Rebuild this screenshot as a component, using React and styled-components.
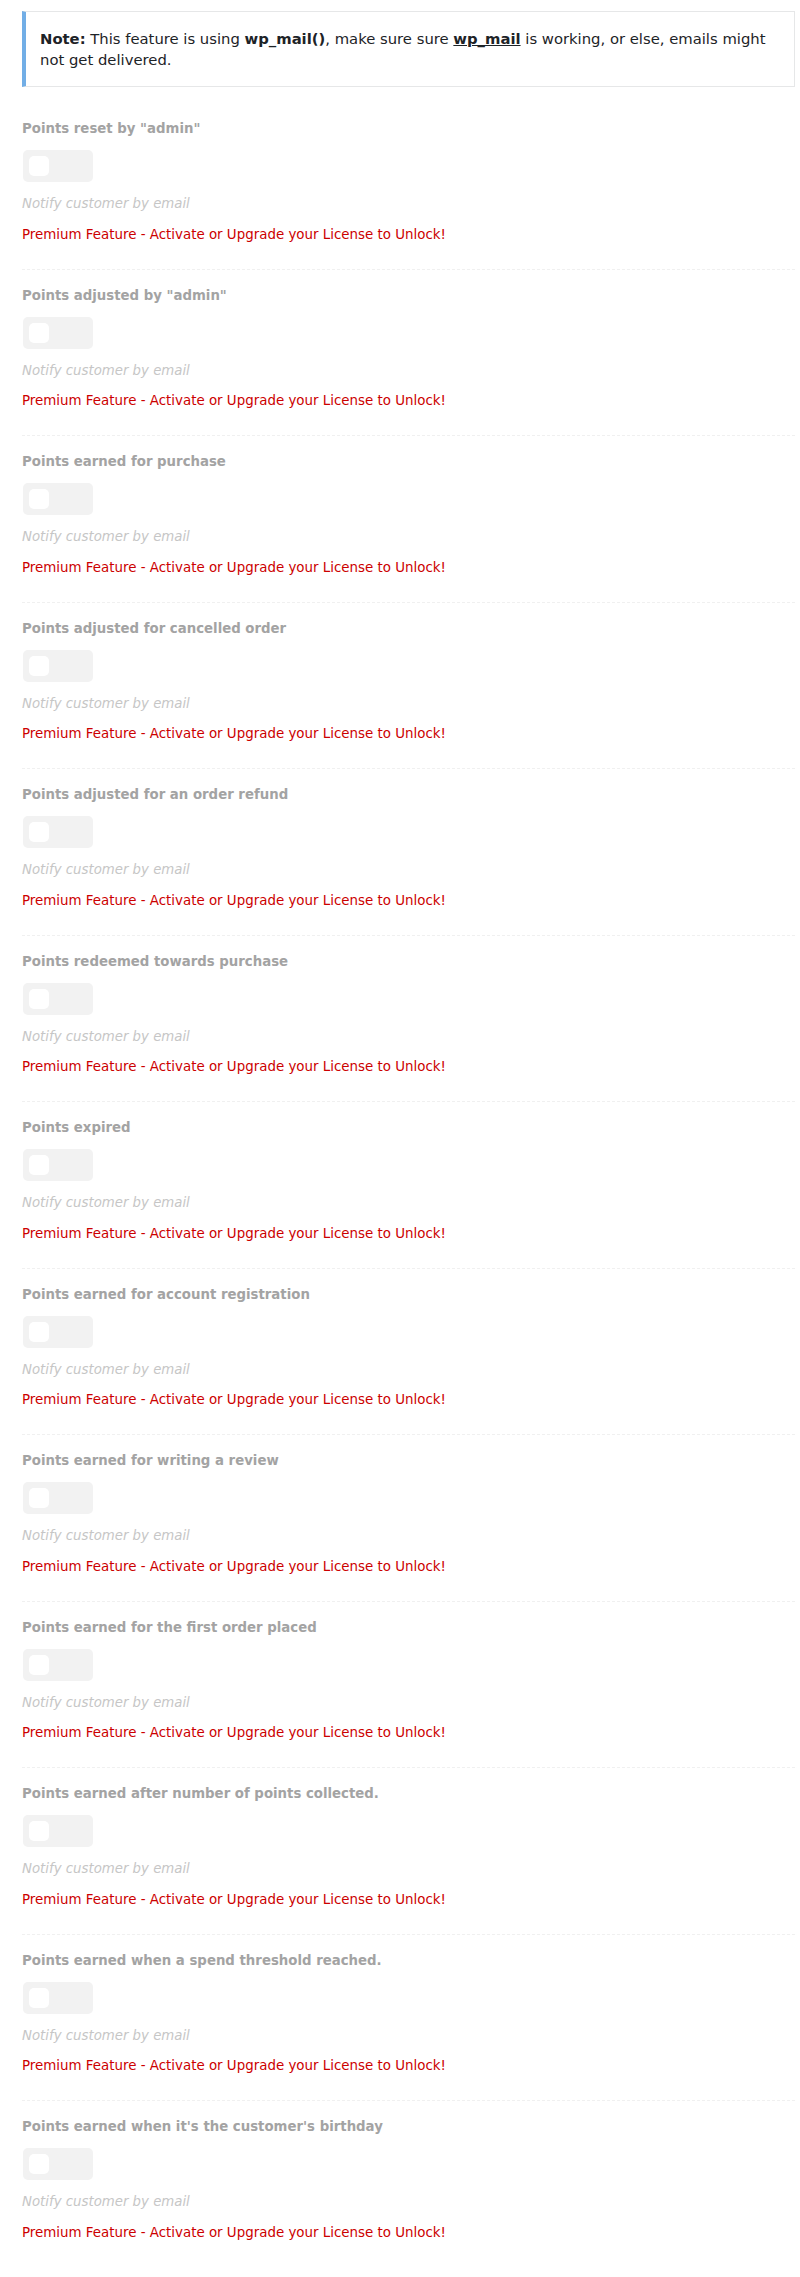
import React from "react";
import styled, { createGlobalStyle } from "styled-components";

const GlobalStyle = createGlobalStyle`
  html, body {
    margin: 0;
    padding: 0;
    background: #ffffff;
  }
  body {
    font-family: "DejaVu Sans", Verdana, sans-serif;
  }
`;

const events = [
  'Points reset by "admin"',
  'Points adjusted by "admin"',
  "Points earned for purchase",
  "Points adjusted for cancelled order",
  "Points adjusted for an order refund",
  "Points redeemed towards purchase",
  "Points expired",
  "Points earned for account registration",
  "Points earned for writing a review",
  "Points earned for the first order placed",
  "Points earned after number of points collected.",
  "Points earned when a spend threshold reached.",
  "Points earned when it's the customer's birthday",
];

const Page = styled.div`
  padding: 11px 5px 34px 22px;
`;

const Notice = styled.div`
  border: 1px solid #e6e7e8;
  border-left: 4px solid #72aee6;
  padding: 16px 14px 16px 14px;
  font-size: 14.8px;
  line-height: 21px;
  color: #1d2327;
  margin-bottom: 16px;

  b {
    font-weight: 700;
  }
  u {
    font-weight: 700;
    text-decoration: underline;
  }
`;

const Section = styled.div`
  padding: 16px 0 24px 0;
  border-bottom: 1px dashed #f0f0f0;

  &:last-child {
    border-bottom: none;
  }
`;

const Heading = styled.div`
  font-size: 13.3px;
  line-height: 20px;
  font-weight: 700;
  color: #a3a3a3;
`;

const Toggle = styled.div`
  margin-top: 11px;
  margin-left: 1px;
  width: 70px;
  height: 32px;
  box-sizing: border-box;
  padding: 6px;
  border-radius: 5px;
  background: #f2f2f2;
  display: flex;
  align-items: center;
`;

const Knob = styled.span`
  width: 20px;
  height: 20px;
  border-radius: 5px;
  background: #ffffff;
`;

const Hint = styled.div`
  margin-top: 12px;
  font-size: 13.3px;
  line-height: 20px;
  font-style: italic;
  color: #c6c6c6;
`;

const Locked = styled.div`
  margin-top: 10.5px;
  font-size: 13.4px;
  line-height: 20px;
  color: #cc0000;
`;

function EmailSetting({ title }) {
  return (
    <Section>
      <Heading>{title}</Heading>
      <Toggle>
        <Knob />
      </Toggle>
      <Hint>Notify customer by email</Hint>
      <Locked>Premium Feature - Activate or Upgrade your License to Unlock!</Locked>
    </Section>
  );
}

export default function App() {
  return (
    <>
      <GlobalStyle />
      <Page>
        <Notice>
          <b>Note:</b> This feature is using <b>wp_mail()</b>, make sure sure{" "}
          <u>wp_mail</u> is working, or else, emails might not get delivered.
        </Notice>
        {events.map((t) => (
          <EmailSetting key={t} title={t} />
        ))}
      </Page>
    </>
  );
}
